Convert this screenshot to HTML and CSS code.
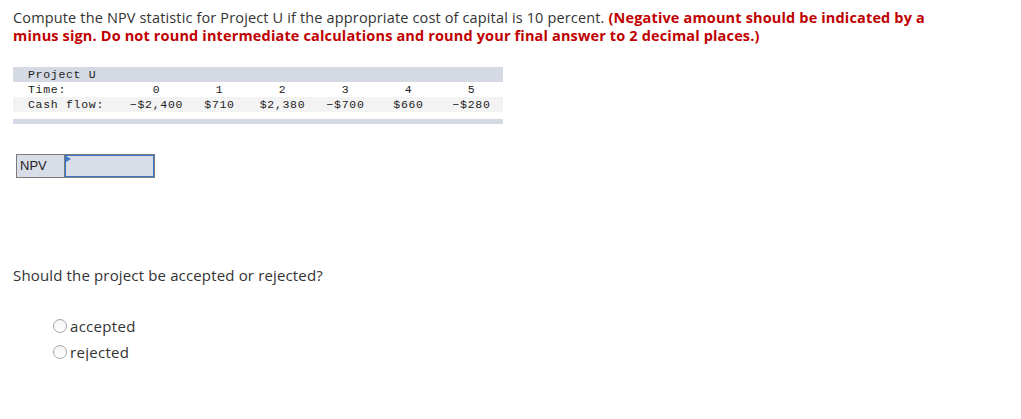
FILE: index.html
```html
<!DOCTYPE html>
<html>
<head>
<meta charset="utf-8">
<link rel="stylesheet" href="styles.css">
</head>
<body>
<div class="page">
  <p class="prompt">Compute the NPV statistic for Project U if the appropriate cost of capital is 10 percent. <strong class="warn">(Negative amount should be indicated by a</strong><br><strong class="warn">minus sign. Do not round intermediate calculations and round your final answer to 2 decimal places.)</strong></p>

  <div class="data">
    <div class="row head"><span class="label">Project U</span></div>
    <div class="row">
      <span class="label">Time:</span>
      <span class="cell">0</span><span class="cell">1</span><span class="cell">2</span><span class="cell">3</span><span class="cell">4</span><span class="cell">5</span>
    </div>
    <div class="row alt">
      <span class="label">Cash flow:</span>
      <span class="cell">&minus;$2,400</span><span class="cell">$710</span><span class="cell">$2,380</span><span class="cell">&minus;$700</span><span class="cell">$660</span><span class="cell">&minus;$280</span>
    </div>
    <div class="foot"></div>
  </div>

  <div class="answer">
    <div class="answer-label">NPV</div>
    <div class="answer-input"><span class="flag"></span></div>
  </div>

  <p class="question">Should the project be accepted or rejected?</p>

  <div class="choices">
    <label class="choice"><span class="radio"></span>accepted</label>
    <label class="choice"><span class="radio"></span>rejected</label>
  </div>
</div>
</body>
</html>
```

FILE: styles.css
```css
html, body {
  margin: 0;
  padding: 0;
  background: #fff;
}
.page {
  padding: 9px 13px 0 13px;
  font-family: "Open Sans", "Liberation Sans", sans-serif;
  color: #333;
  font-size: 14px;
}
.prompt {
  margin: 0;
  font-size: 14.5px;
  letter-spacing: 0.15px;
  line-height: 18px;
  width: 960px;
}
.warn {
  color: #c00000;
  font-weight: 700;
}
.data {
  margin-top: 22px;
  width: 490px;
  font-family: "Liberation Mono", monospace;
  font-size: 11.5px;
  letter-spacing: 0.7px;
  color: #222;
}
.row {
  display: flex;
  height: 15px;
  align-items: center;
}
.row.head {
  background: #d4d9e4;
}
.row.alt {
  background: #f3f3f3;
}
.label {
  width: 112px;
  padding-left: 15px;
  box-sizing: border-box;
  white-space: nowrap;
}
.cell {
  width: 63px;
  text-align: center;
  white-space: nowrap;
}
.foot {
  margin-top: 7px;
  height: 5px;
  background: #d4d9e4;
}
.answer {
  display: flex;
  margin-top: 30px;
  margin-left: 3px;
  height: 24px;
}
.answer-label {
  width: 49px;
  border: 1px solid #7a7a7a;
  background: #d9dde8;
  box-sizing: border-box;
  font-family: "Liberation Sans", sans-serif;
  font-size: 13px;
  color: #222;
  padding-left: 3px;
  line-height: 22px;
}
.answer-input {
  position: relative;
  width: 90px;
  border: 1px solid #7a7a7a;
  border-left: none;
  background: #d9dde8;
  box-sizing: border-box;
  box-shadow: inset 0 0 0 1px #3c78c8;
}
.flag {
  position: absolute;
  left: 1px;
  top: 1px;
  width: 0;
  height: 0;
  border-top: 3px solid transparent;
  border-bottom: 3px solid transparent;
  border-left: 5px solid #3c78c8;
}
.question {
  margin: 88px 0 0 0;
  font-size: 15px;
  letter-spacing: 0.15px;
  line-height: 18px;
}
.choices {
  margin-top: 33px;
  margin-left: 40px;
  display: flex;
  flex-direction: column;
  gap: 8px;
  font-size: 15px;
  letter-spacing: 0.3px;
}
.choice {
  display: flex;
  align-items: center;
  height: 18px;
  line-height: 18px;
}
.radio {
  width: 14px;
  height: 14px;
  border: 1px solid #a5a5a5;
  border-radius: 50%;
  box-sizing: border-box;
  margin-right: 3px;
  background: linear-gradient(#f4f4f4, #fff);
}
```
